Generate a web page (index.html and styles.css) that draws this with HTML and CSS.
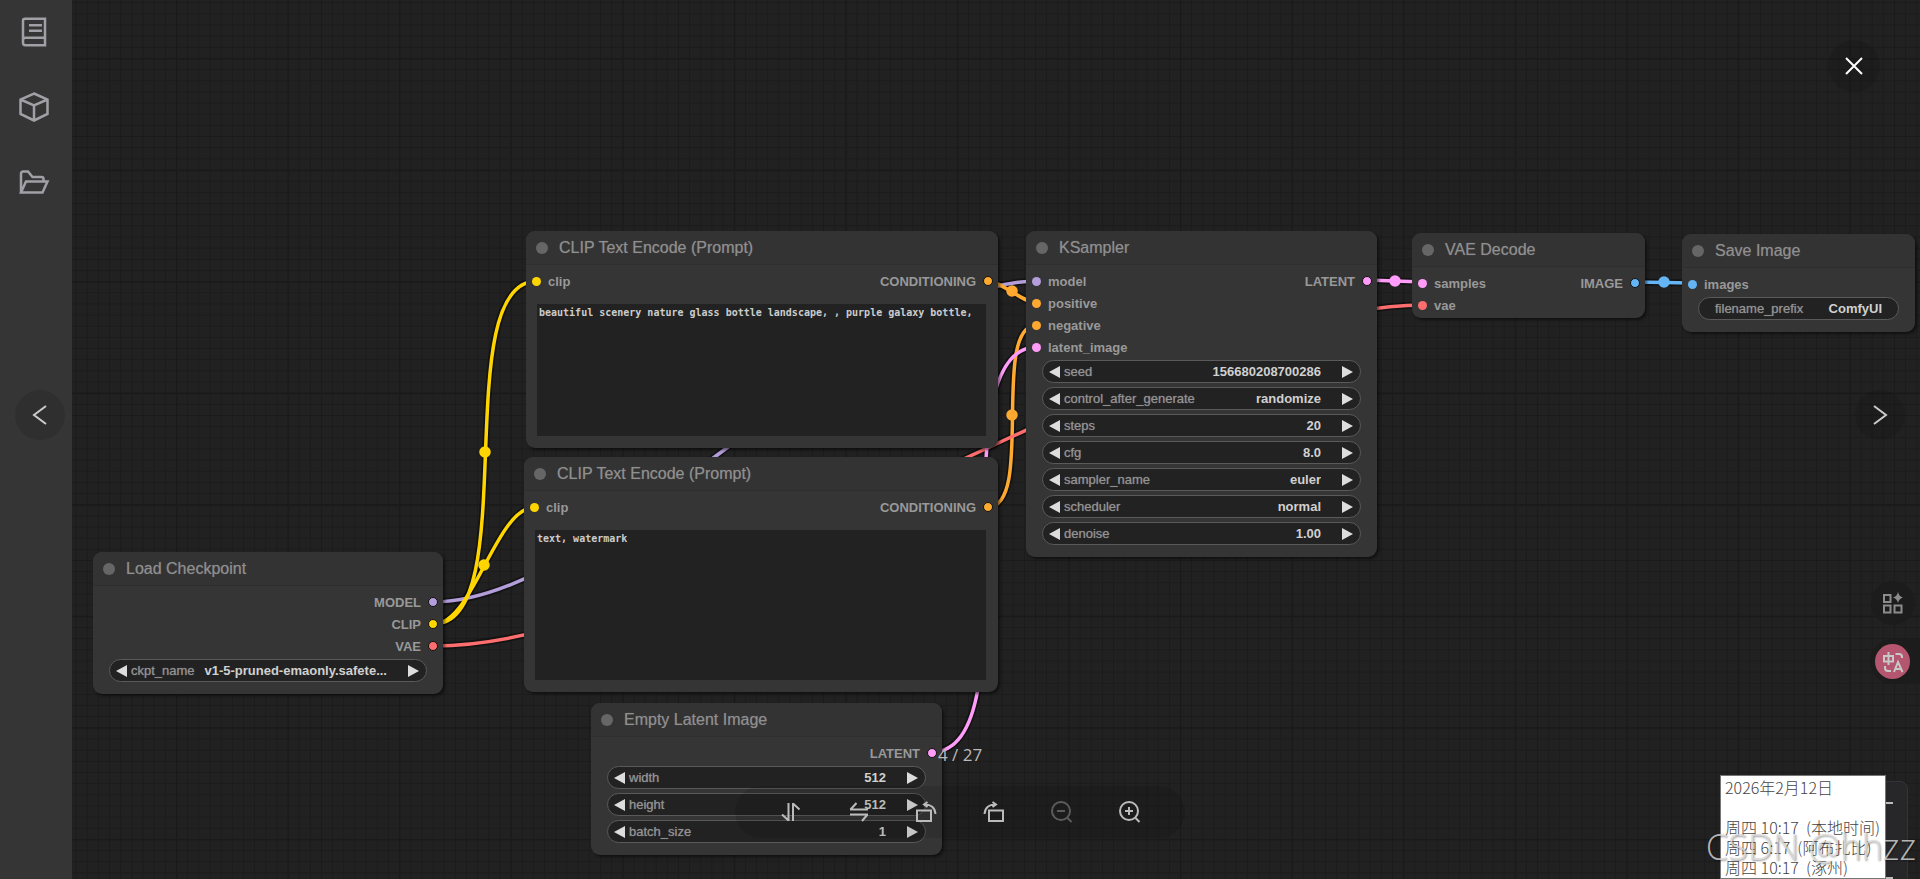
FILE: index.html
```
<!DOCTYPE html>
<html lang="zh-CN">

<head>
    <meta charset="UTF-8">
    <meta name="viewport" content="width=device-width, initial-scale=1">
    <title>ComfyUI</title>
    <link rel="stylesheet" href="styles.css">
</head>

<body>

    <nav class="sidebar">
        <button class="side-button" aria-label="Queue">
            <svg viewBox="0 0 32 32"><path d="M6.500 25V5.500a2 2 0 0 1 2-2H28.500V30H9a2.500 2.500 0 0 1-2.500-2.500V25a2.500 2.500 0 0 1 2.500-2.500H28.500M12.500 10H25.500M12.500 15.500H25.500" transform="translate(-1.500 -.8)"/></svg>
        </button>
        <button class="side-button" aria-label="Models">
            <svg viewBox="0 0 32 32"><path d="M16 2.500L29.500 8.500V23L16 29.500L2.500 23V8.500ZM2.500 8.500L16 14.500L29.500 8.500M16 14.500V29.500"/></svg>
        </button>
        <button class="side-button" aria-label="Workflows">
            <svg viewBox="0 0 32 32"><path d="M3 26.500V7.500a2 2 0 0 1 2-2H10L14.500 11H23.500a2 2 0 0 1 2 2V15M3 26.500L8 15.500H29.500L24.500 26.500Z"/></svg>
        </button>
    </nav>

    <main class="canvas">

        <svg class="grid">
            <defs>
                <pattern id="minor" width="10" height="10" patternUnits="userSpaceOnUse" patternTransform="translate(104 58) scale(1.1156)">
                    <path d="M0 0H10M0 0V10" stroke="#1b1b1b" stroke-width="1.600" fill="none"/>
                </pattern>
                <pattern id="major" width="100" height="100" patternUnits="userSpaceOnUse" patternTransform="translate(104 58) scale(1.1156)">
                    <path d="M0 0H100M0 0V100" stroke="#1a1a1a" stroke-width="2.500" fill="none"/>
                </pattern>
            </defs>
            <rect width="100%" height="100%" fill="url(#minor)"/>
            <rect width="100%" height="100%" fill="url(#major)"/>
        </svg>

        <!-- links between the slots -->
        <svg class="links">
            <g class="shadow">
                <path d="M434 602C605 602 866 281 1037 281"/>
                <path d="M434 624C473 624 496 507 535 507"/>
                <path d="M434 624C524 624 447 281 537 281"/>
                <path d="M434 646C695 646 1162 305 1423 305"/>
                <path d="M932 752C1037 752 932 347 1037 347"/>
                <path d="M988 507C1035 507 990 325 1037 325"/>
                <path d="M987 281C1001 281 1023 303 1037 303"/>
                <path d="M1367 280L1423 282M1636 282L1692 283"/>
            </g>
            <path class="model" d="M434 602C605 602 866 281 1037 281"/>
            <path class="clip" d="M434 624C473 624 496 507 535 507"/>
            <path class="clip" d="M434 624C524 624 447 281 537 281"/>
            <path class="cond" d="M988 507C1035 507 990 325 1037 325"/>
            <path class="vae" d="M434 646C695 646 1162 305 1423 305"/>
            <path class="latent" d="M932 752C1037 752 932 347 1037 347"/>
            <path class="cond" d="M987 281C1001 281 1023 303 1037 303"/>
            <path class="latent" d="M1367 280L1423 282"/>
            <path class="image" d="M1636 282L1692 283"/>
            <circle class="clip" cx="485" cy="452" r="4"/>
            <circle class="clip" cx="484" cy="565" r="4"/>
            <circle class="cond" cx="1012" cy="291" r="4"/>
            <circle class="cond" cx="1012" cy="415" r="4"/>
            <circle class="latent" cx="1395" cy="281" r="4"/>
            <circle class="image" cx="1664" cy="282" r="4"/>
        </svg>

        <section class="node" id="load_checkpoint">
            <h3>Load Checkpoint</h3>
            <div class="slots">
                <ul class="inputs"></ul>
                <ul class="outputs">
                    <li class="model">MODEL</li>
                    <li class="clip">CLIP</li>
                    <li class="vae">VAE</li>
                </ul>
            </div>
            <div class="widgets">
                <div class="widget">
                    <button class="prev" aria-label="Previous"></button>
                    <label for="ckpt_name">ckpt_name</label>
                    <select id="ckpt_name"><option>v1-5-pruned-emaonly.safete...</option></select>
                    <button class="next" aria-label="Next"></button>
                </div>
            </div>
        </section>

        <section class="node" id="prompt_positive">
            <h3>CLIP Text Encode (Prompt)</h3>
            <div class="slots">
                <ul class="inputs">
                    <li class="clip">clip</li>
                </ul>
                <ul class="outputs">
                    <li class="cond">CONDITIONING</li>
                </ul>
            </div>
            <textarea aria-label="Positive prompt" spellcheck="false">beautiful scenery nature glass bottle landscape, , purple galaxy bottle,</textarea>
        </section>

        <section class="node" id="prompt_negative">
            <h3>CLIP Text Encode (Prompt)</h3>
            <div class="slots">
                <ul class="inputs">
                    <li class="clip">clip</li>
                </ul>
                <ul class="outputs">
                    <li class="cond">CONDITIONING</li>
                </ul>
            </div>
            <textarea aria-label="Negative prompt" spellcheck="false">text, watermark</textarea>
        </section>

        <section class="node" id="empty_latent">
            <h3>Empty Latent Image</h3>
            <div class="slots">
                <ul class="inputs"></ul>
                <ul class="outputs">
                    <li class="latent">LATENT</li>
                </ul>
            </div>
            <div class="widgets">
                <div class="widget">
                    <button class="prev" aria-label="Less"></button>
                    <label for="width">width</label>
                    <input type="text" id="width" value="512">
                    <button class="next" aria-label="More"></button>
                </div>
                <div class="widget">
                    <button class="prev" aria-label="Less"></button>
                    <label for="height">height</label>
                    <input type="text" id="height" value="512">
                    <button class="next" aria-label="More"></button>
                </div>
                <div class="widget">
                    <button class="prev" aria-label="Less"></button>
                    <label for="batch_size">batch_size</label>
                    <input type="text" id="batch_size" value="1">
                    <button class="next" aria-label="More"></button>
                </div>
            </div>
        </section>

        <section class="node" id="ksampler">
            <h3>KSampler</h3>
            <div class="slots">
                <ul class="inputs">
                    <li class="model">model</li>
                    <li class="cond">positive</li>
                    <li class="cond">negative</li>
                    <li class="latent">latent_image</li>
                </ul>
                <ul class="outputs">
                    <li class="latent">LATENT</li>
                </ul>
            </div>
            <div class="widgets">
                <div class="widget">
                    <button class="prev" aria-label="Less"></button>
                    <label for="seed">seed</label>
                    <input type="text" id="seed" value="156680208700286">
                    <button class="next" aria-label="More"></button>
                </div>
                <div class="widget">
                    <button class="prev" aria-label="Previous"></button>
                    <label for="control_after_generate">control_after_generate</label>
                    <select id="control_after_generate"><option>randomize</option></select>
                    <button class="next" aria-label="Next"></button>
                </div>
                <div class="widget">
                    <button class="prev" aria-label="Less"></button>
                    <label for="steps">steps</label>
                    <input type="text" id="steps" value="20">
                    <button class="next" aria-label="More"></button>
                </div>
                <div class="widget">
                    <button class="prev" aria-label="Less"></button>
                    <label for="cfg">cfg</label>
                    <input type="text" id="cfg" value="8.0">
                    <button class="next" aria-label="More"></button>
                </div>
                <div class="widget">
                    <button class="prev" aria-label="Previous"></button>
                    <label for="sampler_name">sampler_name</label>
                    <select id="sampler_name"><option>euler</option></select>
                    <button class="next" aria-label="Next"></button>
                </div>
                <div class="widget">
                    <button class="prev" aria-label="Previous"></button>
                    <label for="scheduler">scheduler</label>
                    <select id="scheduler"><option>normal</option></select>
                    <button class="next" aria-label="Next"></button>
                </div>
                <div class="widget">
                    <button class="prev" aria-label="Less"></button>
                    <label for="denoise">denoise</label>
                    <input type="text" id="denoise" value="1.00">
                    <button class="next" aria-label="More"></button>
                </div>
            </div>
        </section>

        <section class="node" id="vae_decode">
            <h3>VAE Decode</h3>
            <div class="slots">
                <ul class="inputs">
                    <li class="latent">samples</li>
                    <li class="vae">vae</li>
                </ul>
                <ul class="outputs">
                    <li class="image">IMAGE</li>
                </ul>
            </div>
        </section>

        <section class="node" id="save_image">
            <h3>Save Image</h3>
            <div class="slots">
                <ul class="inputs">
                    <li class="image">images</li>
                </ul>
                <ul class="outputs"></ul>
            </div>
            <div class="widgets">
                <div class="widget text">
                    <label for="filename_prefix">filename_prefix</label>
                    <input type="text" id="filename_prefix" value="ComfyUI">
                </div>
            </div>
        </section>

        <div class="zoom-menu">
            <button aria-label="Zoom out"></button>
            <button aria-label="Fit view"></button>
        </div>
    </main>

    <!-- image viewer -->
    <button class="viewer-button close" aria-label="Close">
        <svg viewBox="0 0 20 20"><path d="M2 2L18 18M18 2L2 18"/></svg>
    </button>
    <button class="viewer-button left" aria-label="Previous image">
        <svg viewBox="0 0 20 20"><path d="M16 1L4 10L16 19"/></svg>
    </button>
    <button class="viewer-button right" aria-label="Next image">
        <svg viewBox="0 0 20 20"><path d="M4 1L16 10L4 19"/></svg>
    </button>

    <div class="viewer-footer">
        <div class="progress">4 / 27</div>
        <div class="toolbar">
            <button aria-label="Flip vertical">
                <svg viewBox="0 0 22 22"><path d="M9.500 2V20M9.500 19.500L3 13.500M14 20V2M14 2.500L20.500 8.500"/></svg>
            </button>
            <button aria-label="Flip horizontal">
                <svg viewBox="0 0 22 22"><path d="M21 8.500H3M3.500 8.500L9.500 2M3 13.500H21M20.500 13.500L15 20"/></svg>
            </button>
            <button aria-label="Rotate left">
                <svg viewBox="0 0 22 22"><path d="M2 9.500H16V20H2ZM9 3.500C16 3 20 7 20.500 13M12.500 1L9 3.500L12.500 6"/></svg>
            </button>
            <button aria-label="Rotate right">
                <svg viewBox="0 0 22 22"><path d="M6 9.500H20V20H6ZM13 3.500C6 3 2 7 1.500 13M9.500 1L13 3.500L9.500 6"/></svg>
            </button>
            <button aria-label="Zoom out" disabled>
                <svg viewBox="0 0 22 22"><circle cx="10" cy="10" r="9"/><path d="M6 10H14M16.500 17L20.500 21"/></svg>
            </button>
            <button aria-label="Zoom in">
                <svg viewBox="0 0 22 22"><circle cx="10" cy="10" r="9"/><path d="M6 10H14M10 6V14M16.500 17L20.500 21"/></svg>
            </button>
        </div>
    </div>

    <div class="float-tools">
        <button class="apps" aria-label="Apps">
            <svg viewBox="0 0 22 22"><path d="M2 3H8.500V10H2ZM2 13.500H8.500V20.500H2ZM12.500 13.500H19.500V20.500H12.500Z"/><path class="star" d="M16 0Q17 4.500 21 5.500Q17 6.500 16 11Q15 6.500 11 5.500Q15 4.500 16 0Z"/></svg>
        </button>
        <div class="translate">
            <button aria-label="Translate">
                <svg viewBox="0 0 22 22"><path d="M2 5H11V10.500H2ZM6.500 1V14M13.500 3H17a3 3 0 0 1 3 3V7M3 15V17a3 3 0 0 0 3 3H9M12 21L16 11L20.500 21M13.500 18H19"/></svg>
            </button>
        </div>
    </div>

    <div class="clock-tip">2026年2月12日

周四 10:17  (本地时间)
周四 6:17  (阿布扎比)
周四 10:17  (涿州)</div>

    <div class="watermark">CSDN @hhzz</div>

</body>

</html>
```
FILE: styles.css
```
html {
    font-family: Arial, "Liberation Sans", sans-serif;
}

body {
    margin: 0;
    height: 100vh;
    display: flex;
    overflow: hidden;
    background-color: #212121;
}

button {
    padding: 0;
    border: none;
    background: none;
    cursor: pointer;
}

svg {
    display: block;
    fill: none;
}

.sidebar {
    width: 68px;
    padding: 16px 4px 0 0;
    display: flex;
    flex-direction: column;
    gap: 43px;
    background-color: #353535;
}

.side-button {
    display: flex;
    justify-content: center;
}

.side-button svg {
    width: 32px;
    height: 32px;
    stroke: #a0a0a6;
    stroke-width: 2.500;
}

.canvas {
    flex: 1;
    position: relative;
}

.grid {
    position: absolute;
    width: 100%;
    height: 100%;
}

/* Links use window coordinates, so step back over the sidebar */
.links {
    position: absolute;
    left: -72px;
    top: 0;
    width: 1px;
    height: 1px;
    overflow: visible;
    stroke-width: 3.500;
}

.links .shadow {
    stroke: rgba(0, 0, 0, 0.4);
    stroke-width: 7;
}

/* Slot colors */
.model {
    --color: #b39ddb;
}

.clip {
    --color: #ffd500;
}

.vae {
    --color: #ff6e6e;
}

.cond {
    --color: #ffa931;
}

.latent {
    --color: #ff9cf9;
}

.image {
    --color: #64b5f6;
}

.links > path {
    stroke: var(--color);
}

.links circle {
    fill: var(--color);
    stroke: var(--color);
}

/* Nodes */
.node {
    position: absolute;
    border-radius: 9px;
    background-color: #353535;
    box-shadow: 2px 2px 3px rgba(0, 0, 0, 0.5);
}

#load_checkpoint {
    left: 21px;
    top: 552px;
    width: 350px;
}

#prompt_positive {
    left: 454px;
    top: 231px;
    width: 472px;
}

#prompt_negative {
    left: 452px;
    top: 457px;
    width: 474px;
}

#empty_latent {
    left: 519px;
    top: 703px;
    width: 351px;
}

#ksampler {
    left: 954px;
    top: 231px;
    width: 351px;
}

#vae_decode {
    left: 1340px;
    top: 233px;
    width: 233px;
}

#save_image {
    left: 1610px;
    top: 234px;
    width: 233px;
}

.node h3 {
    margin: 0;
    padding-left: 10px;
    height: 33px;
    display: flex;
    align-items: center;
    gap: 11px;
    border-bottom: 1px solid #2e2e2e;
    border-radius: 9px 9px 0 0;
    background-color: #333;
    color: #8f8f8f;
    font-size: 16px;
    font-weight: normal;
    text-shadow: 0 0 1px #666;
}

.node h3:before {
    content: "";
    width: 12px;
    height: 12px;
    border-radius: 50%;
    background-color: #666;
}

.slots {
    padding: 5px 5px 2px 6px;
    display: flex;
    justify-content: space-between;
}

.slots ul {
    margin: 0;
    padding: 0;
    list-style: none;
}

.slots li {
    height: 22px;
    display: flex;
    align-items: center;
    gap: 7px;
    color: #999;
    font-size: 13px;
    font-weight: bold;
}

.slots li:before {
    content: "";
    width: 9px;
    height: 9px;
    border-radius: 50%;
    background-color: var(--color);
}

.slots .outputs li {
    flex-direction: row-reverse;
}

.slots .outputs li:before {
    width: 8px;
    height: 8px;
    border: 1px solid #111;
}

.widgets {
    padding: 0 16px 12px;
    display: flex;
    flex-direction: column;
    gap: 4px;
}

.widget {
    height: 21px;
    padding: 0 7px 0 6px;
    display: flex;
    align-items: center;
    border: 1px solid #5a5a5a;
    border-radius: 12px;
    background-color: #222;
    font-size: 13px;
}

.widget.text {
    padding: 0 16px;
}

.widget label {
    color: #939393;
    text-shadow: 0 0 1px #777;
}

.widget input,
.widget select {
    flex: 1;
    min-width: 0;
    margin: 0;
    padding: 0;
    border: none;
    outline: none;
    appearance: none;
    background: none;
    color: #d0d0d0;
    font: inherit;
    font-weight: bold;
    text-align: right;
    text-align-last: right;
}

.prev,
.next {
    width: 0;
    height: 0;
    border: solid transparent;
}

.prev {
    margin-right: 4px;
    border-width: 6px 11px 6px 0;
    border-right-color: #ddd;
}

.next {
    margin-left: 21px;
    border-width: 6px 0 6px 11px;
    border-left-color: #ddd;
}

.node textarea {
    display: block;
    box-sizing: border-box;
    width: calc(100% - 23px);
    height: 150px;
    margin: 10px 12px 12px 11px;
    padding: 3px 2px;
    border: none;
    outline: none;
    resize: none;
    background-color: #222;
    color: #ccc;
    font-family: "DejaVu Sans Mono", monospace;
    font-size: 10px;
    font-weight: bold;
}

#prompt_positive textarea {
    height: 132px;
}

.zoom-menu {
    position: absolute;
    right: 12px;
    top: 781px;
    width: 44px;
    height: 120px;
    padding-top: 20px;
    box-sizing: border-box;
    display: flex;
    flex-direction: column;
    align-items: center;
    gap: 73px;
    border: 1px solid #343436;
    border-radius: 8px;
    background-color: #27272a;
}

.zoom-menu button {
    width: 14px;
    height: 2px;
    background-color: #bbb;
}

/* Image viewer */
.viewer-button {
    position: absolute;
    width: 52px;
    height: 52px;
    display: flex;
    align-items: center;
    justify-content: center;
    border-radius: 50%;
    background-color: rgba(0, 0, 0, 0.1);
}

.viewer-button svg {
    width: 20px;
    height: 20px;
    stroke: #ccc;
    stroke-width: 2;
}

.close {
    top: 40px;
    right: 40px;
}

.close svg {
    stroke: #fff;
}

.left,
.right {
    top: calc(50% - 50px);
    width: 50px;
    height: 50px;
}

.left {
    left: 15px;
}

.right {
    right: 15px;
}

.viewer-footer {
    position: absolute;
    left: 0;
    right: 0;
    bottom: 41px;
    display: flex;
    flex-direction: column;
    align-items: center;
    gap: 20px;
}

.progress {
    color: #bbb;
    font-family: "Open Sans", sans-serif;
    font-size: 17px;
    line-height: 22px;
}

.toolbar {
    padding: 15px 44px;
    display: flex;
    gap: 46px;
    border-radius: 26px;
    background-color: rgba(0, 0, 0, 0.1);
}

.toolbar svg {
    width: 22px;
    height: 22px;
    stroke: #bbb;
    stroke-width: 2;
}

.toolbar button:disabled {
    opacity: 0.4;
}

/* Floating tools on the right edge */
.float-tools {
    position: absolute;
    right: 0;
    top: 581px;
    display: flex;
    flex-direction: column;
    align-items: flex-end;
    gap: 14px;
}

.apps {
    width: 44px;
    height: 44px;
    margin-right: 5px;
    display: flex;
    align-items: center;
    justify-content: center;
    border-radius: 50%;
    background-color: #1c1c1c;
}

.apps svg {
    width: 22px;
    height: 22px;
    stroke: #8c8c8c;
    stroke-width: 2;
}

.apps .star {
    fill: #8c8c8c;
    stroke: none;
}

.translate {
    padding: 5px 10px 5px 5px;
    border-radius: 23px 0 0 23px;
    background-color: #1c1c1c;
}

.translate button {
    width: 35px;
    height: 35px;
    display: flex;
    align-items: center;
    justify-content: center;
    border-radius: 50%;
    background-color: #b4566f;
}

.translate svg {
    width: 22px;
    height: 22px;
    stroke: #c8c8c8;
    stroke-width: 2;
}

.clock-tip {
    position: absolute;
    right: 34px;
    bottom: 0;
    padding: 1px 5px 1px 4px;
    border: 1px solid #767676;
    background-color: #fff;
    color: #444;
    font-family: "Noto Sans CJK SC", sans-serif;
    font-size: 16px;
    font-weight: 300;
    line-height: 20px;
    white-space: pre;
}

.watermark {
    position: absolute;
    right: 4px;
    bottom: 8px;
    color: rgba(222, 222, 222, 0.8);
    font-family: "Open Sans", sans-serif;
    font-size: 36px;
    font-weight: 300;
    line-height: 48px;
    text-shadow: 1px 1px 2px rgba(0, 0, 0, 0.4);
}
```
